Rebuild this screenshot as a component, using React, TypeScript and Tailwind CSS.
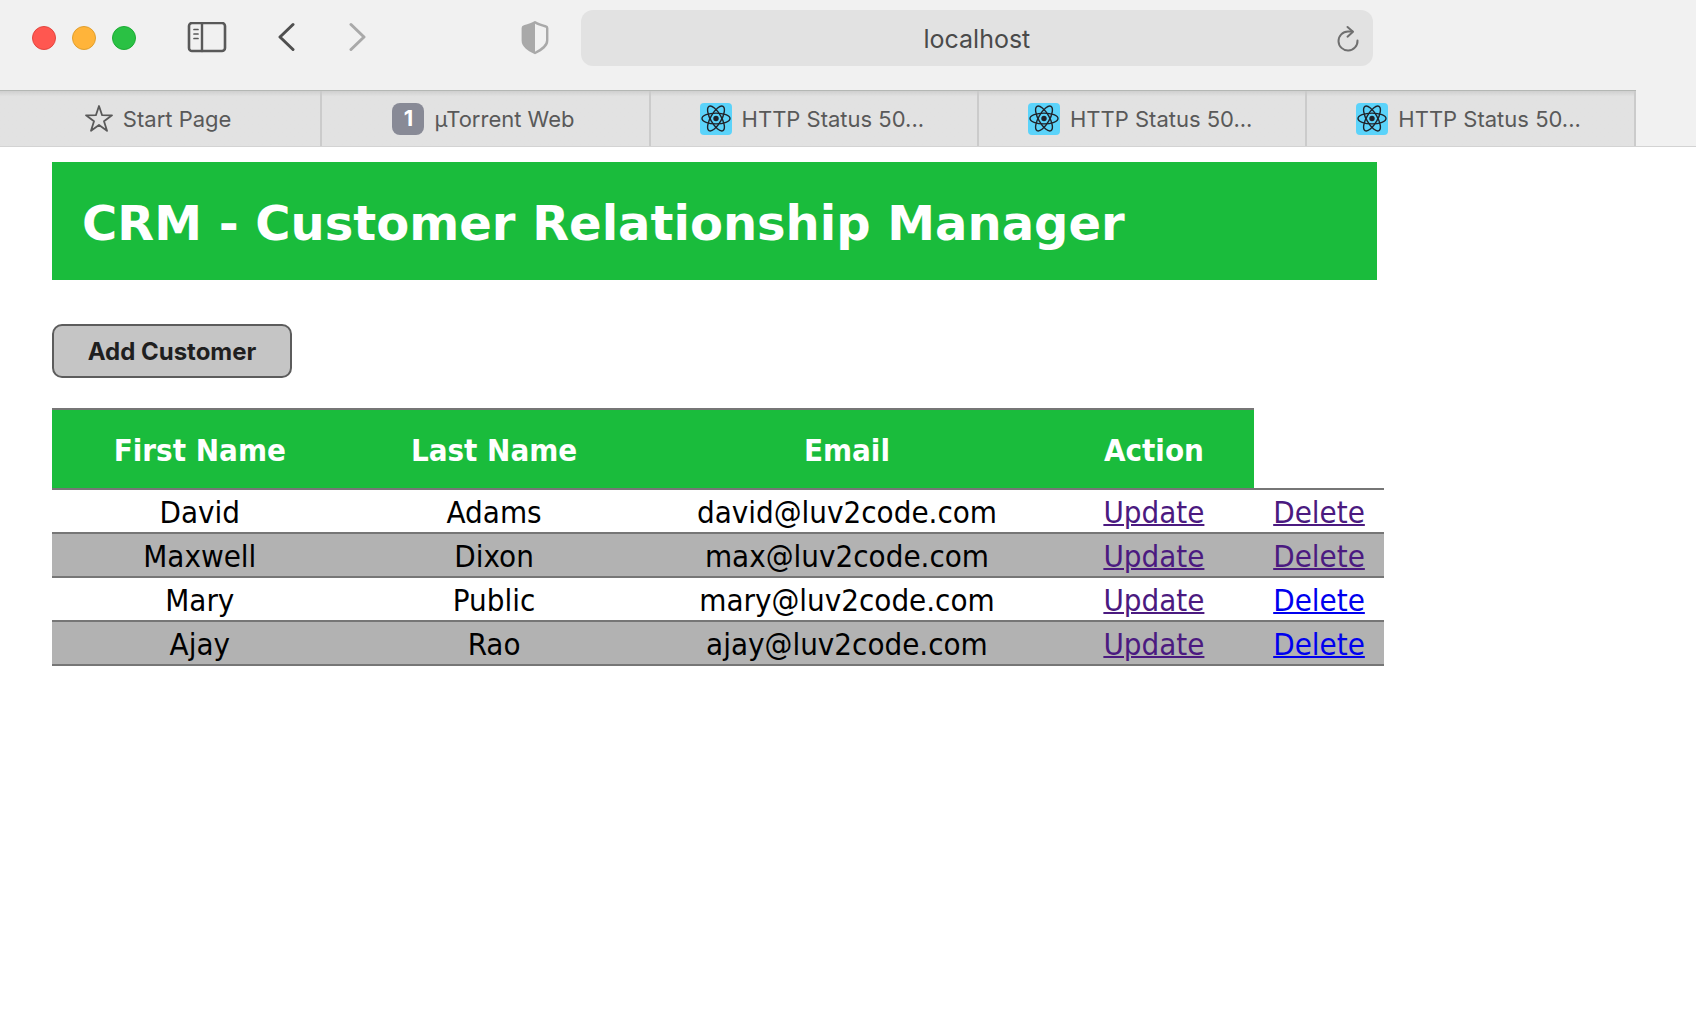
import React from "react";

type Customer = {
  first: string;
  last: string;
  email: string;
  deleteVisited: boolean;
};

const customers: Customer[] = [
  { first: "David", last: "Adams", email: "david@luv2code.com", deleteVisited: true },
  { first: "Maxwell", last: "Dixon", email: "max@luv2code.com", deleteVisited: true },
  { first: "Mary", last: "Public", email: "mary@luv2code.com", deleteVisited: false },
  { first: "Ajay", last: "Rao", email: "ajay@luv2code.com", deleteVisited: false },
];

function SidebarIcon() {
  return (
    <svg width="40" height="32" viewBox="0 0 40 32" fill="none" stroke="#595959" strokeLinecap="round">
      <rect x="2" y="1" width="36" height="28" rx="3" strokeWidth="2.6" />
      <path d="M15 1v28" strokeWidth="2.4" />
      <path d="M7 7.500h4M7 12h4M7 16.500h4" strokeWidth="1.7" />
    </svg>
  );
}

function ChevronIcon({ forward = false }: { forward?: boolean }) {
  return (
    <svg width="20" height="32" viewBox="0 0 20 32" fill="none" strokeWidth="3" strokeLinecap="round" strokeLinejoin="round" stroke={forward ? "#a9a9a9" : "#4f4f4f"}>
      <path d={forward ? "M5 2.500 18 15 5 27.500" : "M18 2.500 5 15l13 12.500"} />
    </svg>
  );
}

function ShieldIcon() {
  return (
    <svg width="28" height="34" viewBox="0 0 28 34">
      <path d="M14 1.300C16.500 3 21 4.500 25 5.500c.9.2 1.200.7 1.200 1.500V19.500c0 5.500-5.500 9-12.200 12.500C7.300 28.500 1.800 25 1.800 19.500V7C1.800 6.200 2.100 5.700 3 5.500c4-1 8.500-2.500 11-4.200Z" fill="none" stroke="#a9a9a9" strokeWidth="2.400" strokeLinejoin="round" />
      <path d="M14 1.300V32C7.300 28.500 1.800 25 1.800 19.500V7C1.800 6.200 2.100 5.700 3 5.500c4-1 8.500-2.500 11-4.200Z" fill="#a9a9a9" />
    </svg>
  );
}

function ReloadIcon() {
  return (
    <svg width="22" height="28" viewBox="0 0 22 28" fill="none" stroke="#6f6f6f" strokeWidth="2" strokeLinecap="round" strokeLinejoin="round">
      <path d="M20.500 16.500A9.500 9.500 0 1 1 11 7.500H15.500" />
      <path d="M10.500 3l5.500 4.700-5.500 5" />
    </svg>
  );
}

function StarIcon() {
  return (
    <svg width="28" height="28" viewBox="0 0 28 28" fill="none" stroke="#595959" strokeWidth="1.800" strokeLinejoin="round">
      <path d="M14 1 17.100 10.200 27 10.300 19 16.200 22 25.800 14 20 6 25.800 9 16.200 1 10.300 10.900 10.200Z" />
    </svg>
  );
}

function ReactIcon() {
  return (
    <svg width="32" height="32" viewBox="0 0 32 32" fill="none" stroke="#20232a" strokeWidth="1.400" className="shrink-0">
      <rect width="32" height="32" rx="4" fill="#5bd3fa" stroke="none" />
      <ellipse cx="16" cy="15.500" rx="14" ry="5.400" />
      <ellipse cx="16" cy="15.500" rx="14" ry="5.400" transform="rotate(60 16 15.500)" />
      <ellipse cx="16" cy="15.500" rx="14" ry="5.400" transform="rotate(120 16 15.500)" />
      <circle cx="16" cy="15.500" r="2.700" fill="#20232a" stroke="none" />
    </svg>
  );
}

function Tab({ icon, title }: { icon: React.ReactNode; title: string }) {
  return (
    <button
      type="button"
      className="flex min-w-0 flex-1 items-center justify-center gap-2.5 border-r-2 border-[#cbcbcb] bg-[#e2e2e2] bg-linear-to-b from-[#cfcfcf] to-[#e2e2e2] to-10% pr-1 text-[22px] text-[#595959]"
    >
      {icon}
      <span className="pt-0.5">{title}</span>
    </button>
  );
}

function BrowserChrome() {
  return (
    <header className="bg-[#f1f1f1] font-[Inter,sans-serif]">
      <div className="flex h-[90px] items-center pb-[14px]">
        <div className="flex w-[34.25%] items-center pr-8 pl-8">
          <div className="flex gap-4">
            <button type="button" aria-label="Close" className="size-6 rounded-full border border-[#e2463f] bg-[#ff5750]" />
            <button type="button" aria-label="Minimize" className="size-6 rounded-full border border-[#e09f2e] bg-[#ffb43a]" />
            <button type="button" aria-label="Zoom" className="size-6 rounded-full border border-[#1dac34] bg-[#2ac144]" />
          </div>
          <button type="button" aria-label="Sidebar" className="ml-[51px]"><SidebarIcon /></button>
          <button type="button" aria-label="Back" className="ml-12"><ChevronIcon /></button>
          <button type="button" aria-label="Forward" className="ml-[51px]"><ChevronIcon forward /></button>
          <button type="button" aria-label="Privacy report" className="ml-auto"><ShieldIcon /></button>
        </div>
        <div className="flex h-14 w-[46.7%] items-center rounded-xl bg-[#e2e2e2] pr-3.5 pl-9">
          <input
            type="text"
            aria-label="Address"
            defaultValue="localhost"
            className="min-w-0 flex-1 bg-transparent pt-1 text-center text-[25px] text-[#4a4a4a] outline-none"
          />
          <button type="button" aria-label="Reload"><ReloadIcon /></button>
        </div>
      </div>
      <div className="border-b border-[#d3d3d3]">
        <nav aria-label="Tabs" className="flex h-14 w-[96.450%] border-t border-[#b4b7b4]">
          <div className="flex w-[19.700%]"><Tab icon={<StarIcon />} title="Start Page" /></div>
          <Tab
            icon={<span className="flex size-8 items-center justify-center rounded-lg bg-[#888a96] font-bold text-white">1</span>}
            title="µTorrent Web"
          />
          <Tab icon={<ReactIcon />} title="HTTP Status 50..." />
          <Tab icon={<ReactIcon />} title="HTTP Status 50..." />
          <Tab icon={<ReactIcon />} title="HTTP Status 50..." />
        </nav>
      </div>
    </header>
  );
}

function CustomerTable() {
  return (
    <table className="mt-[30px] w-[81%] table-fixed border-collapse text-center font-['DejaVu_Sans_Condensed','DejaVu_Sans',sans-serif] text-[31px] leading-[40px] text-black">
      <colgroup>
        <col className="w-[22.200%]" />
        <col className="w-[22%]" />
        <col className="w-[31%]" />
        <col className="w-[15.100%]" />
        <col />
      </colgroup>
      <thead>
        <tr className="h-20">
          {["First Name", "Last Name", "Email", "Action"].map((title) => (
            <th key={title} scope="col" className="border-y-2 border-[#767676] bg-[#1abc3c] pt-0.5 font-bold text-white">
              {title}
            </th>
          ))}
          <td className="border-b-2 border-[#767676]" />
        </tr>
      </thead>
      <tbody>
        {customers.map((c) => (
          <tr key={c.email} className="h-11 border-b-2 border-[#767676] even:bg-[#b2b2b2]">
            <td className="pt-0.5">{c.first}</td>
            <td className="pt-0.5">{c.last}</td>
            <td className="pt-0.5">{c.email}</td>
            <td className="pt-0.5">
              <a href="#update" className="text-[#4b1a80] underline decoration-2">Update</a>
            </td>
            <td className="pt-0.5">
              <a
                href="#delete"
                className={c.deleteVisited ? "text-[#4b1a80] underline decoration-2" : "text-[#0000ee] underline decoration-2"}
              >
                Delete
              </a>
            </td>
          </tr>
        ))}
      </tbody>
    </table>
  );
}

export default function App() {
  return (
    <div className="min-h-screen bg-white">
      <BrowserChrome />
      <main className="pt-[15px] pl-[52px]">
        <div className="w-[80.600%] bg-[#1abc3c] px-[30px] pt-8 pb-7">
          <h1 className="font-['DejaVu_Sans',sans-serif] text-[48px] leading-[58px] font-bold text-white">
            CRM - Customer Relationship Manager
          </h1>
        </div>
        <button
          type="button"
          className="mt-11 flex h-[54px] w-60 items-center justify-center rounded-[10px] border-2 border-[#5c5c5c] bg-[#c5c5c5] pt-0.5 font-[Inter,sans-serif] text-[24px] font-bold text-[#1f1f1f]"
        >
          Add Customer
        </button>
        <CustomerTable />
      </main>
    </div>
  );
}
